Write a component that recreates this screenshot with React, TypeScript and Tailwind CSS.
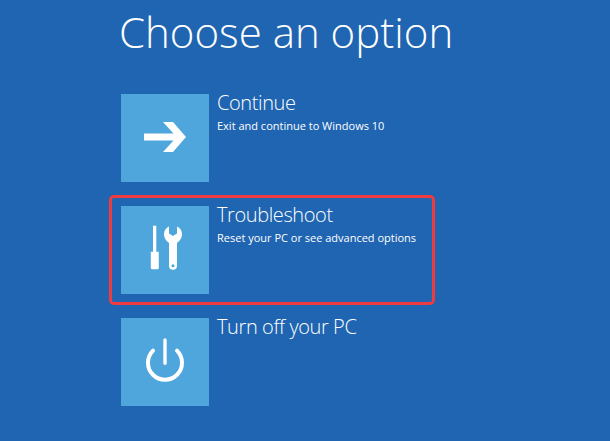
const fontStack = { fontFamily: '"Open Sans", "Noto Sans", sans-serif' };

const Option = ({ icon, title, desc }: { icon: React.ReactNode; title: string; desc?: string }) => (
  <div className="flex gap-2">
    <div className="w-[88px] h-[88px] shrink-0 bg-[#4ea6dc]">{icon}</div>
    <div className="-mt-[3px]">
      <h2 className="text-[20px] leading-[24px] font-light text-white tracking-[-0.4px]">{title}</h2>
      {desc && <p className="text-[11px] leading-[14px] mt-[4px] text-white">{desc}</p>}
    </div>
  </div>
);

const ArrowIcon = (
  <svg viewBox="0 0 88 88" className="w-full h-full" fill="#fff">
    <path d="M42 28h10l13 15-13 15H42l10.5-11.5H23v-7h29.5z" />
  </svg>
);

const ToolsIcon = (
  <svg viewBox="0 0 88 88" className="w-full h-full" fill="#fff">
    <path d="M32 19.7h3.3v26H37.8v16a1.5 1.5 0 0 1-1.5 1.5h-5a1.5 1.5 0 0 1-1.5-1.5v-16H32z" />
    <path
      fillRule="evenodd"
      d="M48 20.5v7l4 2.5 4-2.5v-7c3 1.2 5 4 5 7.5 0 4-2.4 7.3-5 8.8V59.7a4 4 0 0 1-8 0V36.8c-2.6-1.5-5-4.8-5-8.8 0-3.5 2-6.3 5-7.5zM52 58.2a1.5 1.5 0 1 0 0 3 1.5 1.5 0 0 0 0-3z"
    />
  </svg>
);

const PowerIcon = (
  <svg viewBox="0 0 88 88" className="w-full h-full" fill="none" stroke="#fff">
    <path d="M32 32.7a17 17 0 1 0 24 0" strokeWidth="4" strokeLinecap="round" />
    <path d="M44 22v23.3" strokeWidth="3.4" strokeLinecap="round" />
  </svg>
);

export default function App() {
  return (
    <div className="w-[610px] h-[441px] overflow-hidden bg-[#1f65b1] pl-[121px]" style={fontStack}>
      <h1 className="text-[42px] leading-[60px] font-light text-white -ml-[2px] pt-[2px]">Choose an option</h1>
      <div className="mt-[32px] flex flex-col">
        <Option icon={ArrowIcon} title="Continue" desc="Exit and continue to Windows 10" />
        <div className="relative mt-[24px]">
          <Option icon={ToolsIcon} title="Troubleshoot" desc="Reset your PC or see advanced options" />
          <div className="absolute left-[-12px] top-[-11px] w-[326px] h-[110px] border-[3px] border-[#ef3b3f] rounded-[5px]" />
        </div>
        <div className="mt-[24px]">
          <Option icon={PowerIcon} title="Turn off your PC" />
        </div>
      </div>
    </div>
  );
}
